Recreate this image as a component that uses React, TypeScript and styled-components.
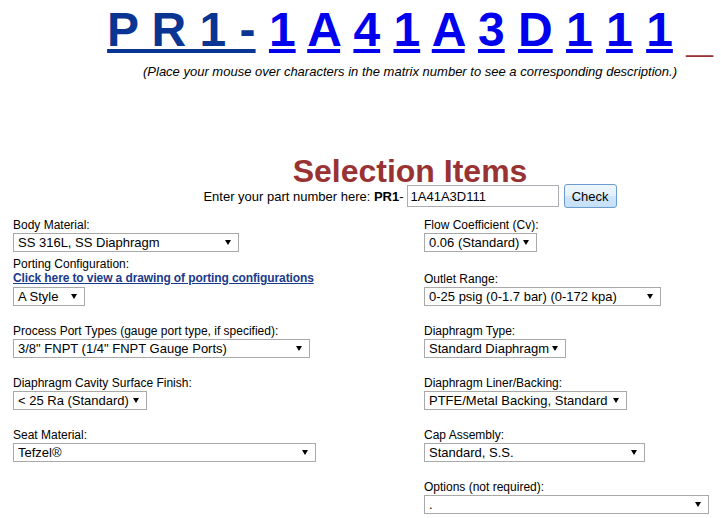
import React from "react";
import styled, { createGlobalStyle } from "styled-components";

const GlobalStyle = createGlobalStyle`
  html, body { margin: 0; padding: 0; background: #fff; }
  body { font-family: "Liberation Sans", Arial, Helvetica, sans-serif; color: #000; }
`;

const Page = styled.div`
  width: 721px;
  font-family: "Liberation Sans", Arial, Helvetica, sans-serif;
`;

const Masthead = styled.header`
  padding-left: 99px;
  text-align: center;
`;

const Matrix = styled.div`
  padding-top: 6px;
  font-size: 48px;
  font-weight: bold;
  line-height: 48px;
  white-space: nowrap;
`;

const PrefixLink = styled.a`
  color: #0a3592;
  text-decoration: underline;
`;

const CodeLink = styled.a`
  color: #0000ee;
  text-decoration: underline;
`;

const Tail = styled.span`
  color: #993333;
  line-height: 0;
  vertical-align: -5px;
`;

const Hint = styled.p`
  margin: 10px 0 0;
  font-size: 13px;
  font-style: italic;
  line-height: 15px;
`;

const Title = styled.h1`
  margin: 79px 0 0;
  font-size: 32px;
  font-weight: bold;
  line-height: 26px;
  color: #993333;
`;

const EntryRow = styled.form`
  display: flex;
  justify-content: center;
  align-items: center;
  height: 24px;
  margin: 0;
  font-size: 13px;
`;

const Prompt = styled.span`
  white-space: pre;
`;

const PartInput = styled.input`
  box-sizing: border-box;
  width: 152px;
  height: 22px;
  margin: 0 0 0 3px;
  padding: 0 3px;
  border: 1px solid #abadb3;
  font: 13px "Liberation Sans", Arial, sans-serif;
  color: #000;
  background: #fff;
`;

const CheckButton = styled.button`
  box-sizing: border-box;
  width: 53px;
  height: 24px;
  margin-left: 5px;
  padding: 0;
  border: 1px solid #6a9ccf;
  border-radius: 3px;
  background: linear-gradient(#eef6fd 0%, #e2f0fc 50%, #cfe6fa 51%, #c4e0f8 100%);
  font: 13px "Liberation Sans", Arial, sans-serif;
  color: #000;
`;

const FormGrid = styled.div`
  display: grid;
  grid-template-columns: 411px 1fr;
  align-items: end;
  padding-left: 13px;
  margin-top: 10px;
`;

const Field = styled.div<{ $top: number }>`
  display: flex;
  flex-direction: column;
  align-items: flex-start;
  margin-top: ${(p) => p.$top}px;
`;

const Label = styled.label`
  font-size: 12px;
  line-height: 14px;
  color: #000;
`;

const PortLink = styled.a`
  font-size: 12px;
  font-weight: bold;
  line-height: 15px;
  letter-spacing: -0.11px;
  color: #1a3a8a;
  text-decoration: underline;
`;

const SelectShell = styled.div<{ $w: number }>`
  position: relative;
  box-sizing: border-box;
  width: ${(p) => p.$w}px;
  height: 19px;
  margin-top: 1px;
`;

const NativeSelect = styled.select`
  appearance: none;
  -webkit-appearance: none;
  box-sizing: border-box;
  display: block;
  width: 100%;
  height: 100%;
  margin: 0;
  padding: 0 16px 0 4px;
  border: 1px solid #a9a9a9;
  border-radius: 0;
  background: #fff;
  font: 13px "Liberation Sans", Arial, sans-serif;
  color: #000;
`;

const Caret = styled.svg`
  position: absolute;
  right: 8px;
  top: 7px;
  pointer-events: none;
`;

type DropProps = { width: number; value: string };

const Drop = ({ width, value }: DropProps) => (
  <SelectShell $w={width}>
    <NativeSelect defaultValue={value}>
      <option value={value}>{value}</option>
    </NativeSelect>
    <Caret width="6" height="5" viewBox="0 0 6 5">
      <polygon points="0,0 6,0 3,5" fill="#000" />
    </Caret>
  </SelectShell>
);

const codes = ["1", "A", "4", "1", "A", "3", "D", "1", "1", "1"];

export default function App() {
  return (
    <Page>
      <GlobalStyle />
      <Masthead>
        <Matrix>
          <PrefixLink href="#">P R 1 -</PrefixLink>
          {codes.map((c, i) => (
            <React.Fragment key={i}>
              {" "}
              <CodeLink href="#">{c}</CodeLink>
            </React.Fragment>
          ))}{" "}
          <Tail>_</Tail>
        </Matrix>
        <Hint>
          (Place your mouse over characters in the matrix number to see a corresponding description.)
        </Hint>
        <Title>Selection Items</Title>
        <EntryRow onSubmit={(e) => e.preventDefault()}>
          <Prompt>
            Enter your part number here: <b>PR1</b>-
          </Prompt>
          <PartInput defaultValue="1A41A3D111" />
          <CheckButton type="submit">Check</CheckButton>
        </EntryRow>
      </Masthead>

      <FormGrid>
        <Field $top={0}>
          <Label>Body Material:</Label>
          <Drop width={226} value="SS 316L, SS Diaphragm" />
        </Field>
        <Field $top={0}>
          <Label>Flow Coefficient (Cv):</Label>
          <Drop width={113} value="0.06 (Standard)" />
        </Field>

        <Field $top={5}>
          <Label>Porting Configuration:</Label>
          <PortLink href="#">Click here to view a drawing of porting configurations</PortLink>
          <Drop width={72} value="A Style" />
        </Field>
        <Field $top={5}>
          <Label>Outlet Range:</Label>
          <Drop width={237} value="0-25 psig (0-1.7 bar) (0-172 kpa)" />
        </Field>

        <Field $top={18}>
          <Label>Process Port Types (gauge port type, if specified):</Label>
          <Drop width={297} value={'3/8" FNPT (1/4" FNPT Gauge Ports)'} />
        </Field>
        <Field $top={18}>
          <Label>Diaphragm Type:</Label>
          <Drop width={142} value="Standard Diaphragm" />
        </Field>

        <Field $top={18}>
          <Label>Diaphragm Cavity Surface Finish:</Label>
          <Drop width={134} value="< 25 Ra (Standard)" />
        </Field>
        <Field $top={18}>
          <Label>Diaphragm Liner/Backing:</Label>
          <Drop width={203} value="PTFE/Metal Backing, Standard" />
        </Field>

        <Field $top={18}>
          <Label>Seat Material:</Label>
          <Drop width={303} value="Tefzel®" />
        </Field>
        <Field $top={18}>
          <Label>Cap Assembly:</Label>
          <Drop width={221} value="Standard, S.S." />
        </Field>

        <div />
        <Field $top={18}>
          <Label>Options (not required):</Label>
          <Drop width={285} value="." />
        </Field>
      </FormGrid>
    </Page>
  );
}
